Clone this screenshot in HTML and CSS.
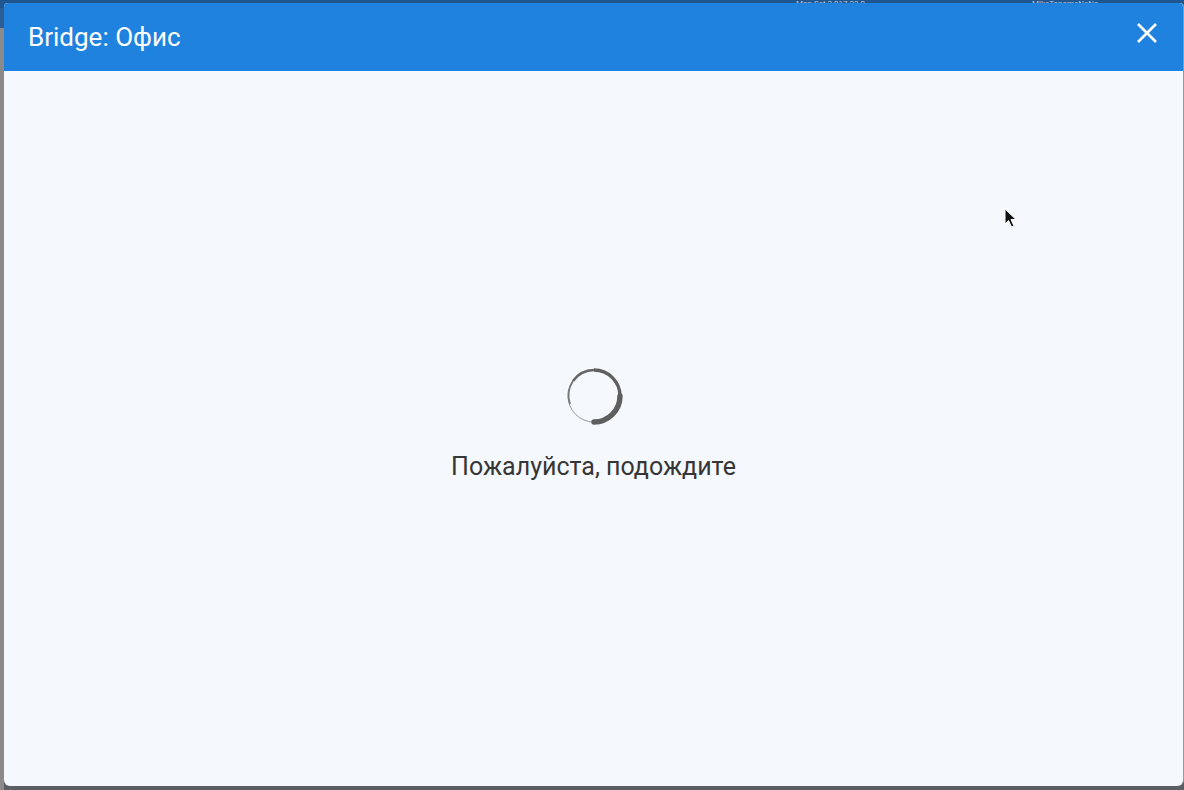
FILE: index.html
```html
<!DOCTYPE html>
<html lang="ru">
<head>
<meta charset="utf-8">
<title>Bridge: Офис</title>
<link rel="stylesheet" href="styles.css">
</head>
<body>
<div class="backdrop">
  <div class="topstrip">
    <span class="bgtext t1">Mon Set 2 017 22 0</span>
    <span class="bgtext t2">MikeTonomeNeNc</span>
  </div>
  <div class="dialog">
    <div class="header">
      <div class="title">Bridge: Офис</div>
      <button class="close" aria-label="Закрыть">
        <svg width="22" height="22" viewBox="0 0 22 22"><path d="M2 2 L20 20 M20 2 L2 20" stroke="#fff" stroke-width="2.6" stroke-linecap="butt"/></svg>
      </button>
    </div>
    <div class="content">
      <div class="loader">
        <svg class="spinner" width="60" height="60" viewBox="0 0 60 60">
          <circle cx="30" cy="30" r="26" fill="none" stroke="#9a9a9a" stroke-width="1"/>
          <path d="M30 4 A26 26 0 0 1 56 30" fill="none" stroke="#5f5f5f" stroke-width="3.4"/>
          <path d="M56 30 A26 26 0 0 1 30 56" fill="none" stroke="#5f5f5f" stroke-width="5.4" stroke-linecap="round"/>
          <path d="M30 4 A26 26 0 0 0 9 15" fill="none" stroke="#666" stroke-width="2.6"/>
          <path d="M9 15 A26 26 0 0 0 6 38" fill="none" stroke="#777" stroke-width="1.8"/>
        </svg>
        <div class="wait">Пожалуйста, подождите</div>
      </div>
      <svg class="cursor" width="16" height="22" viewBox="0 0 16 22"><path d="M1 1 L1 16 L4.5 12.5 L7.5 19 L10 18 L7 11.5 L12 11.5 Z" fill="#111" stroke="#fff" stroke-width="1"/></svg>
    </div>
  </div>
</div>
</body>
</html>
```
FILE: styles.css
```css
html, body {
  margin: 0;
  padding: 0;
  width: 1184px;
  height: 790px;
  overflow: hidden;
  font-family: Roboto, "Noto Sans", sans-serif;
}
.backdrop {
  position: relative;
  width: 1184px;
  height: 790px;
  background: linear-gradient(to right, #8a8a8a 0, #8a8a8a 4px, #5b5e63 4px);
  background-color: #7d7f83;
  display: flex;
  box-sizing: border-box;
  padding: 3px 1px 4px 4px;
}
.backdrop::before {
  content: "";
  position: absolute;
  left: 0; top: 0;
  width: 4px; height: 28px;
  background: #2c5d94;
}
.topstrip {
  position: absolute;
  left: 0; top: 0;
  width: 1184px; height: 8px;
  background: #1f568f;
  overflow: hidden;
}
.bgtext {
  position: absolute;
  top: 0;
  font-size: 8px;
  line-height: 8px;
  color: #b8c6d8;
  white-space: nowrap;
}
.t1 { left: 796px; }
.t2 { left: 1032px; }
.dialog {
  position: relative;
  flex: 1;
  display: flex;
  flex-direction: column;
  background: #f5f8fd;
  border-radius: 4px 4px 6px 6px;
  overflow: hidden;
  box-shadow: 1px 0 0 #999;
}
.header {
  height: 68px;
  background: #1e82de;
  display: flex;
  align-items: center;
  justify-content: space-between;
  padding: 0 25px 0 24px;
  flex-shrink: 0;
}
.title {
  color: #fff;
  font-size: 26px;
  font-weight: 400;
  margin-top: -1px;
}
.close {
  background: none;
  border: 0;
  padding: 0;
  width: 22px;
  height: 22px;
  cursor: pointer;
  margin-top: -8px;
}
.close svg { display: block; }
.content {
  position: relative;
  flex: 1;
  display: flex;
  align-items: center;
  justify-content: center;
}
.loader {
  display: flex;
  flex-direction: column;
  align-items: center;
  margin-top: -10px;
}
.spinner {
  display: block;
}
.wait {
  margin-top: 26px;
  font-size: 25px;
  color: #363636;
}
.cursor {
  position: absolute;
  left: 1000px;
  top: 137px;
}
```
